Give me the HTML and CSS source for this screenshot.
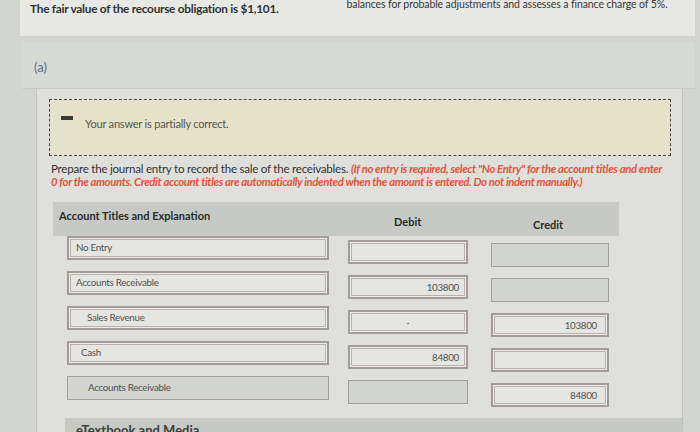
FILE: index.html
```html
<!DOCTYPE html>
<html>
<head>
<meta charset="utf-8">
<link rel="stylesheet" href="styles.css">
</head>
<body>
<div class="top-card">
  <p class="fair">The fair value of the recourse obligation is $1,101.</p>
  <p class="prev">balances for probable adjustments and assesses a finance charge of 5%.</p>
</div>
<section class="part">
  <div class="part-head"><span class="part-label">(a)</span></div>
  <div class="part-body">
    <div class="notice">
      <span class="dash-icon"></span>
      <span class="notice-text">Your answer is partially correct.</span>
    </div>
    <p class="instr">Prepare the journal entry to record the sale of the receivables. <em class="red">(If no entry is required, select "No Entry" for the account titles and enter 0 for the amounts. Credit account titles are automatically indented when the amount is entered. Do not indent manually.)</em></p>
    <div class="table">
      <div class="thead">
        <span class="th th-acct">Account Titles and Explanation</span>
        <span class="th th-debit">Debit</span>
        <span class="th th-credit">Credit</span>
      </div>
      <div class="row">
        <div class="inp acct">No Entry</div>
        <div class="inp debit"></div>
        <div class="inp credit off"></div>
      </div>
      <div class="row">
        <div class="inp acct">Accounts Receivable</div>
        <div class="inp debit num">103800</div>
        <div class="inp credit off"></div>
      </div>
      <div class="row">
        <div class="inp acct indent">Sales Revenue</div>
        <div class="inp debit dot">&middot;</div>
        <div class="inp credit num">103800</div>
      </div>
      <div class="row">
        <div class="inp acct cash">Cash</div>
        <div class="inp debit num">84800</div>
        <div class="inp credit"></div>
      </div>
      <div class="row">
        <div class="inp acct indent2 off">Accounts Receivable</div>
        <div class="inp debit off"></div>
        <div class="inp credit num">84800</div>
      </div>
    </div>
    <div class="media-bar"><span class="media-text">eTextbook and Media</span></div>
  </div>
</section>
</body>
</html>
```
FILE: styles.css
```css
html, body {
  margin: 0;
  padding: 0;
}
body {
  width: 700px;
  height: 432px;
  overflow: hidden;
  background: #d3d5d1;
  font-family: Lato, "Open Sans", sans-serif;
  color: #2e2f2d;
}
p { margin: 0; }

.top-card {
  margin-left: 20px;
  margin-right: 5px;
  height: 36px;
  background: #e8e9e5;
  display: flex;
  align-items: flex-start;
  overflow: hidden;
  border-bottom: 1px solid #d0d1cd;
}
.fair {
  margin-left: 10px;
  margin-top: 1px;
  font-size: 11.8px;
  font-weight: 700;
  color: #303130;
  letter-spacing: -0.25px;
  white-space: nowrap;
}
.prev {
  margin-left: 68px;
  margin-top: -2px;
  font-size: 10.5px;
  color: #363735;
  white-space: nowrap;
  letter-spacing: -0.1px;
}

.part {
  margin-top: 5px;
  margin-left: 22px;
}
.part-head {
  height: 46px;
  margin-right: 5px;
  background: #d8dad6;
  display: flex;
  align-items: center;
  border-bottom: 1px solid #c9cbc7;
}
.part-label {
  margin-left: 12px;
  margin-top: 4px;
  font-size: 13px;
  color: #5a6f86;
}
.part-body {
  margin-left: 14px;
  width: 647px;
  height: 343px;
  background: #dfe0dc;
  border-left: 1px solid #c4c6c2;
  border-right: 1px solid #bfc1bd;
  padding-top: 10px;
  box-sizing: border-box;
  display: flex;
  flex-direction: column;
}
.notice {
  margin-left: 12px;
  width: 622px;
  height: 57px;
  box-sizing: border-box;
  border: 1.5px dashed #4a4a44;
  background: #e6e1c9;
  display: flex;
  align-items: flex-start;
  padding-left: 11px;
  padding-top: 16px;
}
.dash-icon {
  width: 12px;
  height: 4px;
  background: #3b3b36;
}
.notice-text {
  margin-left: 12px;
  margin-top: 1px;
  font-size: 11px;
  color: #55564f;
  letter-spacing: -0.2px;
}
.instr {
  margin-left: 14px;
  margin-top: 6px;
  width: 617px;
  font-size: 11.6px;
  line-height: 13px;
  color: #333432;
  letter-spacing: -0.25px;
}
.red {
  color: #e0553a;
  font-weight: 700;
  font-style: italic;
  font-size: 11.3px;
  letter-spacing: -0.35px;
}
.table {
  margin-left: 16px;
  margin-top: 14px;
  width: 566px;
}
.thead {
  height: 34px;
  background: #c6c9c5;
  display: flex;
  align-items: flex-start;
}
.th {
  font-size: 11px;
  font-weight: 700;
  color: #2b2c2a;
}
.th-acct {
  margin-left: 6px;
  margin-top: 7px;
  width: 335px;
}
.th-debit {
  margin-top: 13px;
  width: 139px;
}
.th-credit {
  margin-top: 16px;
}
.row {
  display: flex;
  align-items: flex-start;
  padding-left: 14px;
  height: 35px;
}
.inp {
  height: 24px;
  box-sizing: border-box;
  border: 2px solid #a39b9a;
  box-shadow: inset 0 0 0 1px #ecece8, inset 0 0 0 2px #b7b1b0;
  background: #e5e6e2;
  font-size: 9.8px;
  color: #505150;
  display: flex;
  align-items: center;
  padding: 0 7px;
  white-space: nowrap;
  letter-spacing: -0.3px;
}
.acct {
  width: 262px;
  padding-bottom: 3px;
}
.indent { padding-left: 18px; }
.indent2 { padding-left: 20px; }
.cash { padding-left: 12px; }
.debit {
  width: 120px;
  margin-left: 19px;
  margin-top: 4px;
  justify-content: flex-end;
}
.credit {
  width: 118px;
  margin-left: 23px;
  margin-top: 7px;
  justify-content: flex-end;
  padding-right: 10px;
}
.off {
  background: #d2d4d0;
  box-shadow: none;
  border: 1.5px solid #a39f9d;
}
.dot {
  justify-content: center;
  font-size: 10px;
}
.media-bar {
  margin-top: auto;
  margin-left: 28px;
  height: 14px;
  background: #c7c9c5;
  overflow: hidden;
}
.media-text {
  display: block;
  margin-left: 11px;
  margin-top: 4px;
  font-size: 13px;
  font-weight: 700;
  color: #3d3e3c;
}
```
